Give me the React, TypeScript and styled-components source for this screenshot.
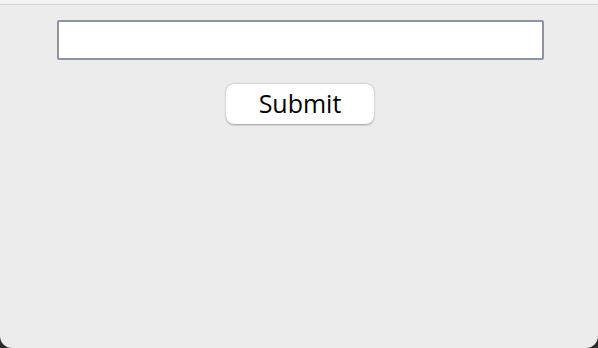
import React from 'react'
import styled, { createGlobalStyle } from 'styled-components'

const GlobalStyle = createGlobalStyle`
  html, body {
    margin: 0;
    padding: 0;
    background: #2b2b2b;
  }
  body {
    font-family: "Open Sans", "Liberation Sans", sans-serif;
  }
`;

const SWindow = styled.div`
  width: 598px;
  height: 348px;
  box-sizing: border-box;
  background: #ececec;
  border-radius: 0 0 12px 12px;
  display: flex;
  flex-direction: column;
  align-items: center;
  overflow: hidden;
`;

const STopBar = styled.div`
  width: 100%;
  height: 4px;
  background: #f3f3f3;
  border-bottom: 1px solid #d2d2d2;
  flex-shrink: 0;
`;

const SForm = styled.form`
  width: 100%;
  box-sizing: border-box;
  display: flex;
  flex-direction: column;
  align-items: center;
  padding: 15px 0 0 2px;
  gap: 24px;
`;

const SInput = styled.input`
  width: 487px;
  height: 40px;
  box-sizing: border-box;
  border: 2px solid #8f94a4;
  border-radius: 2px;
  background: #fff;
  outline: none;
  padding: 0 6px;
  font-size: 16px;
`;

const SButton = styled.button`
  width: 148px;
  height: 40px;
  box-sizing: border-box;
  background: #fff;
  border: none;
  border-radius: 8px;
  box-shadow: 0 0.5px 2px rgba(0, 0, 0, 0.35);
  font-family: "Open Sans", "Liberation Sans", sans-serif;
  font-size: 25px;
  color: #000;
  padding: 0 0 2px;
  cursor: pointer;
`;

const App: React.FC = () => {
  return (
    <>
      <GlobalStyle />
      <SWindow>
        <STopBar />
        <SForm onSubmit={(e) => e.preventDefault()}>
          <SInput type="text" />
          <SButton type="submit">Submit</SButton>
        </SForm>
      </SWindow>
    </>
  )
}

export default App
